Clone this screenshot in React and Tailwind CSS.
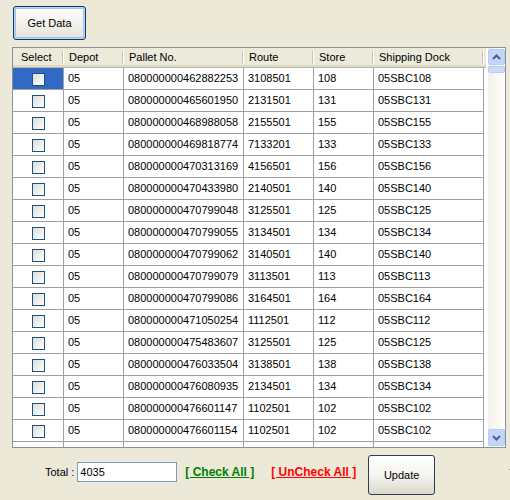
import React from "react";

const rows = [
  ["080000000462882253", "3108501", "108"],
  ["080000000465601950", "2131501", "131"],
  ["080000000468988058", "2155501", "155"],
  ["080000000469818774", "7133201", "133"],
  ["080000000470313169", "4156501", "156"],
  ["080000000470433980", "2140501", "140"],
  ["080000000470799048", "3125501", "125"],
  ["080000000470799055", "3134501", "134"],
  ["080000000470799062", "3140501", "140"],
  ["080000000470799079", "3113501", "113"],
  ["080000000470799086", "3164501", "164"],
  ["080000000471050254", "1112501", "112"],
  ["080000000475483607", "3125501", "125"],
  ["080000000476033504", "3138501", "138"],
  ["080000000476080935", "2134501", "134"],
  ["080000000476601147", "1102501", "102"],
  ["080000000476601154", "1102501", "102"],
];

function Checkbox() {
  return (
    <span className="block h-[13px] w-[13px] border border-[#1c5180] bg-gradient-to-br from-[#dcdcd7] to-white" />
  );
}

function Chevron({ down }) {
  return (
    <svg width="9" height="6" viewBox="0 0 9 6" className={down ? "rotate-180" : ""}>
      <path d="M1 5 L4.5 1.5 L8 5" fill="none" stroke="#4d6185" strokeWidth="2" />
    </svg>
  );
}

function HeaderCell({ w, children, first }) {
  return (
    <div className={`relative flex h-full shrink-0 items-center whitespace-nowrap ${w} ${first ? "pl-[8px]" : "pl-[5px]"}`}>
      {children}
      <span className="absolute right-0 top-[3px] h-[13px] w-[2px] border-l border-[#c7c5b2] bg-white" />
    </div>
  );
}

function Cell({ w, children }) {
  return (
    <div className={`flex h-full shrink-0 items-center whitespace-nowrap border-r border-[#a0a0a0] pl-[4px] ${w}`}>
      {children}
    </div>
  );
}

export default function App() {
  return (
    <div className="relative h-[500px] w-[510px] overflow-hidden bg-[#ece9d8] font-['Liberation_Sans',Arial,sans-serif] text-[11px] text-black">
      <div className="pl-[13px] pt-[6px]">
        <button className="h-[34px] w-[73px] rounded-[3px] border border-[#003c74] bg-gradient-to-b from-white to-[#e6e3d6] shadow-[inset_0_0_0_1px_#c2d4f5,inset_0_0_0_2px_#a8c2ee]">
          Get Data
        </button>
      </div>

      <div className="ml-[12px] mt-[7px] flex h-[401px] w-[494px] border border-[#8e9194] bg-white">
        <div className="w-[475px] shrink-0 overflow-hidden">
          <div className="flex h-[20px] w-[473px] border-b border-[#b9b6a4] bg-[#ebeadb] shadow-[inset_0_-2px_0_#dedac9]">
            <HeaderCell w="w-[51px]" first>Select</HeaderCell>
            <HeaderCell w="w-[60px]">Depot</HeaderCell>
            <HeaderCell w="w-[120px]">Pallet No.</HeaderCell>
            <HeaderCell w="w-[70px]">Route</HeaderCell>
            <HeaderCell w="w-[60px]">Store</HeaderCell>
            <HeaderCell w="w-[110px]">Shipping Dock</HeaderCell>
          </div>
          {rows.map((r, i) => (
            <div key={i} className="flex h-[22px] w-[471px] border-b border-[#a0a0a0]">
              <div
                className={`flex h-full w-[51px] shrink-0 justify-center border-r border-[#a0a0a0] pl-[1px] pt-[5px] ${
                  i === 0 ? "bg-[#316ac5]" : ""
                }`}
              >
                <Checkbox />
              </div>
              <Cell w="w-[60px]">05</Cell>
              <Cell w="w-[120px]">{r[0]}</Cell>
              <Cell w="w-[70px]">{r[1]}</Cell>
              <Cell w="w-[60px]">{r[2]}</Cell>
              <Cell w="w-[110px]">05SBC{r[2]}</Cell>
            </div>
          ))}
          {/* next row, only its top edge shows */}
          <div className="flex h-[22px] w-[471px]">
            <Cell w="w-[51px]" />
            <Cell w="w-[60px]" />
            <Cell w="w-[120px]" />
            <Cell w="w-[70px]" />
            <Cell w="w-[60px]" />
            <Cell w="w-[110px]" />
          </div>
        </div>

        <div className="flex w-[17px] shrink-0 flex-col bg-gradient-to-r from-[#f3f1ec] to-[#fefefb] pt-[1px]">
          <div className="flex h-[16px] items-center justify-center rounded-[2px] border border-[#b7cbf5] bg-[#c4d5fc]">
            <Chevron />
          </div>
          <div className="mt-[1px] h-[7px] rounded-[2px] border border-[#b7cbf5] bg-[#cbdafc]" />
          <div className="flex-1" />
          <div className="mb-[1px] flex h-[17px] items-center justify-center rounded-[2px] border border-[#b7cbf5] bg-[#c4d5fc]">
            <Chevron down />
          </div>
        </div>
      </div>

      <div className="mt-[7px] flex items-start whitespace-nowrap">
        <span className="ml-[45px] mt-[9px] shrink-0">Total :</span>
        <input
          readOnly
          value="4035"
          className="ml-[3px] mt-[7px] h-[20px] w-[100px] shrink-0 border border-[#7f9db9] bg-white px-[2px] text-[11px] outline-none"
        />
        <a className="ml-[8px] mt-[8px] shrink-0 text-[12px] font-bold text-[#008000] underline">[ Check All ]</a>
        <a className="ml-[17px] mt-[8px] shrink-0 text-[12px] font-bold text-[#ff0000] underline">[ UnCheck All ]</a>
        <button className="ml-[12px] h-[40px] w-[67px] shrink-0 rounded-[3px] border border-[#2b3e56] bg-gradient-to-b from-white via-[#f5f4ef] to-[#dcd8cc]">
          Update
        </button>
        <span className="ml-[74px] mt-[10px] shrink-0">T</span>
      </div>
    </div>
  );
}
